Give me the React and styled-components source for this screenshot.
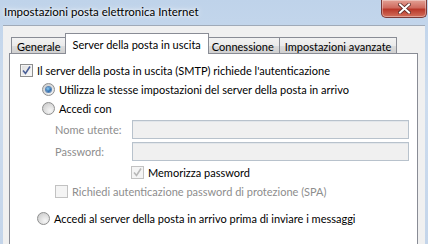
import React from 'react'
import styled, { createGlobalStyle, css } from 'styled-components'

const Global = createGlobalStyle`
    html, body { margin: 0; padding: 0; }
    body { background: #cfdcea; }
`

const Window = styled.div`
    width: 428px;
    height: 244px;
    overflow: hidden;
    display: flex;
    flex-direction: column;
    background: linear-gradient(180deg, #bfd3ea 0%, #cddcee 40%, #c4d5ea 100%);
    font-family: Lato, "Noto Sans", sans-serif;
    font-size: 11px;
    color: #000;
`

const TitleBar = styled.div`
    height: 25px;
    flex: none;
    display: flex;
    justify-content: space-between;
    align-items: flex-start;
    padding: 0 1px 0 4px;
    box-sizing: border-box;
`

const Title = styled.span`
    margin-top: 5px;
    font-size: 11.5px;
    color: #000;
    text-shadow: 0 0 6px #fff, 0 0 3px #fff;
`

const Close = styled.button`
    width: 46px;
    height: 18px;
    margin: 0;
    padding: 0;
    border: 1px solid #7a3a38;
    border-top: none;
    border-radius: 0 0 5px 5px;
    background: linear-gradient(180deg, #e3a195 0%, #cf6b5f 45%, #b9382a 55%, #d3705c 100%);
    box-shadow: inset 0 0 0 1px rgba(255,255,255,0.35);
    display: flex;
    align-items: center;
    justify-content: center;
`

const Client = styled.div`
    flex: 1;
    margin: 0 3px;
    background: #f0f0f0;
    border-top: 1px solid #a0aab8;
    padding: 7px 7px 0 6px;
    display: flex;
    flex-direction: column;
`

const TabRow = styled.div`
    display: flex;
    align-items: flex-end;
    height: 21px;
    padding-left: 2px;
    position: relative;
    z-index: 1;
    margin-bottom: -1px;
`

const Tab = styled.div`
    height: ${p => p.$active ? 21 : 17}px;
    box-sizing: border-box;
    padding: 0 ${p => p.$active ? 7 : 5}px;
    margin: 0 ${p => p.$active ? -2 : 0}px;
    border: 1px solid #898c95;
    border-bottom: ${p => p.$active ? 'none' : '1px solid #898c95'};
    ${p => !p.$active && css`border-left: none;`}
    ${p => p.$first && css`border-left: 1px solid #898c95;`}
    background: ${p => p.$active ? '#fff' : 'linear-gradient(180deg, #f2f2f2 0%, #ebebeb 50%, #dddddd 51%, #cfcfcf 100%)'};
    position: relative;
    z-index: ${p => p.$active ? 2 : 1};
    display: flex;
    align-items: center;
    white-space: nowrap;
    line-height: 1;
    padding-top: ${p => p.$active ? 0 : 1}px;
`

const Panel = styled.div`
    flex: 1;
    background: #fff;
    border: 1px solid #898c95;
    border-bottom: none;
    padding: 7px 0 0 10px;
    display: flex;
    flex-direction: column;
`

const Row = styled.div`
    display: flex;
    align-items: center;
    height: ${p => p.$h || 19}px;
    padding-left: ${p => p.$indent || 0}px;
    color: ${p => p.$disabled ? '#8d8d8d' : '#000'};
    white-space: nowrap;
    gap: 4px;
`

const Label = styled.span`
    width: 73px;
    flex: none;
`

const Input = styled.div`
    width: 277px;
    height: 19px;
    box-sizing: border-box;
    border: 1px solid #b8c2cc;
    background: #f0f0f0;
    box-shadow: inset 0 1px 0 #e2e6ea;
`

const Box = styled.span`
    width: 13px;
    height: 13px;
    flex: none;
    box-sizing: border-box;
    border: 1px solid ${p => p.$disabled ? '#c2c2c2' : '#8e8f8f'};
    background: ${p => p.$disabled ? '#f4f4f4' : 'linear-gradient(135deg, #dcdcdc 0%, #fbfbfb 100%)'};
    box-shadow: inset 0 0 0 1px #f4f4f4;
    display: flex;
    align-items: center;
    justify-content: center;
`

const Radio = styled.span`
    width: 13px;
    height: 13px;
    flex: none;
    box-sizing: border-box;
    border-radius: 50%;
    border: 1px solid #8e8f8f;
    background: radial-gradient(circle at 65% 70%, #f6f6f6 0%, #d4d4d4 70%, #c4c4c4 100%);
    display: flex;
    align-items: center;
    justify-content: center;
`

const Dot = styled.span`
    width: 5px;
    height: 5px;
    border-radius: 50%;
    background: radial-gradient(circle at 40% 35%, #8fd0f4 0%, #2a6cb0 60%, #173f78 100%);
    box-shadow: 0 0 0 1px #5b86b6;
`

const Plain = styled.span`
    color: ${p => p.$dark ? '#000' : 'inherit'};
`

const Check = ({ disabled }) => (
    <svg width="9" height="9" viewBox="0 0 9 9">
        <path d="M1 4.5 L3.5 7.5 L8 0.5" fill="none" stroke={disabled ? '#b8b8b8' : '#4a5f97'} strokeWidth="1.6" />
    </svg>
)

const CheckBox = ({ checked, disabled }) => (
    <Box $disabled={disabled}>{checked && <Check disabled={disabled} />}</Box>
)

const RadioBtn = ({ checked }) => (
    <Radio>{checked && <Dot />}</Radio>
)

const tabs = ['Generale', 'Server della posta in uscita', 'Connessione', 'Impostazioni avanzate']

export default function App() {
    return (
        <Window>
            <Global />
            <TitleBar>
                <Title>Impostazioni posta elettronica Internet</Title>
                <Close aria-label="Chiudi">
                    <svg width="13" height="11" viewBox="0 0 13 11">
                        <path d="M2 1.5 L11 9.5 M11 1.5 L2 9.5" stroke="#5a2a26" strokeWidth="3.6" strokeLinecap="square" />
                        <path d="M2 1.5 L11 9.5 M11 1.5 L2 9.5" stroke="#fff" strokeWidth="2" strokeLinecap="square" />
                    </svg>
                </Close>
            </TitleBar>
            <Client>
                <TabRow>
                    {tabs.map((t, i) => (
                        <Tab key={t} $active={i === 1} $first={i === 0}>{t}</Tab>
                    ))}
                </TabRow>
                <Panel>
                    <Row>
                        <CheckBox checked />
                        <Plain>Il server della posta in uscita (SMTP) richiede l'autenticazione</Plain>
                    </Row>
                    <Row $indent={22}>
                        <RadioBtn checked />
                        <Plain>Utilizza le stesse impostazioni del server della posta in arrivo</Plain>
                    </Row>
                    <Row $indent={22}>
                        <RadioBtn />
                        <Plain>Accedi con</Plain>
                    </Row>
                    <Row $indent={35} $h={22} $disabled>
                        <Label>Nome utente:</Label>
                        <Input />
                    </Row>
                    <Row $indent={35} $h={22} $disabled>
                        <Label>Password:</Label>
                        <Input />
                    </Row>
                    <Row $indent={111} $h={20} $disabled>
                        <CheckBox checked disabled />
                        <Plain $dark>Memorizza password</Plain>
                    </Row>
                    <Row $indent={35} $h={18} $disabled>
                        <CheckBox disabled />
                        <Plain>Richiedi autenticazione password di protezione (SPA)</Plain>
                    </Row>
                    <Row $indent={17} $h={36}>
                        <RadioBtn />
                        <Plain>Accedi al server della posta in arrivo prima di inviare i messaggi</Plain>
                    </Row>
                </Panel>
            </Client>
        </Window>
    )
}
